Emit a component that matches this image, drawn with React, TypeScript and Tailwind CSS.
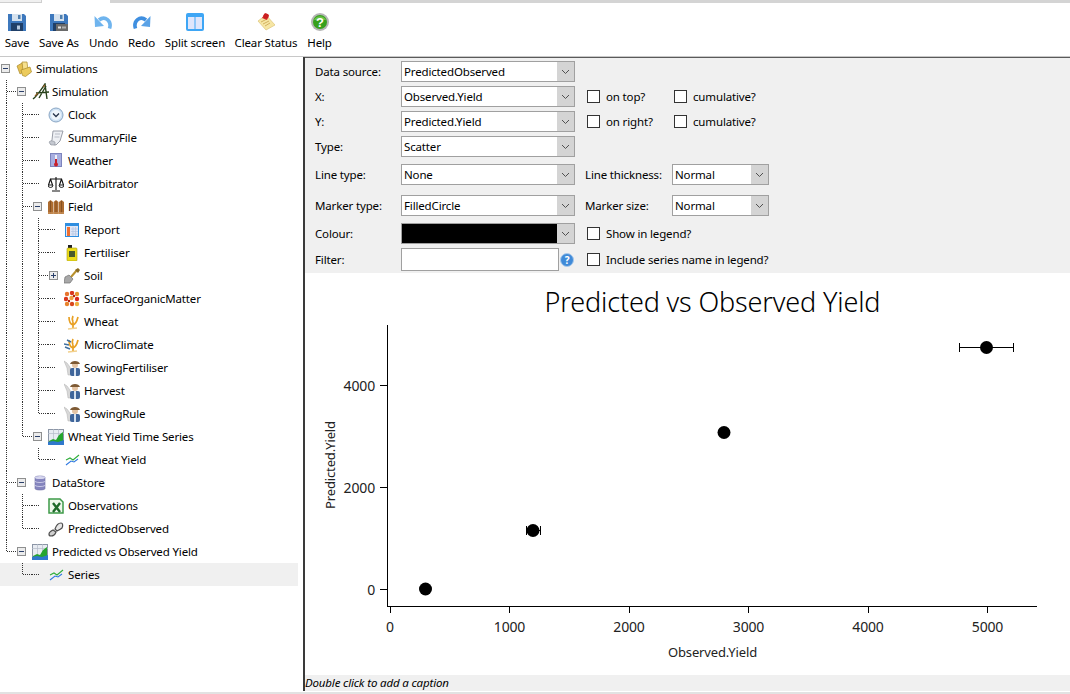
import type { ReactNode } from 'react';

const Svg = ({ size = 16, children }: { size?: number; children: ReactNode }) => (
  <svg width={size} height={size} viewBox={`0 0 ${size} ${size}`} className="shrink-0">
    {children}
  </svg>
);

// toolbar icons (18px)
const SaveIcon = ({ extra }: { extra?: boolean }) => (
  <Svg size={18}>
    <path d="M0 1h16l2 2v15H0z" fill="#3d78bd" />
    <rect x="4" y="1" width="10" height="7" fill="#d6e2ee" />
    <rect x="10" y="2" width="2.5" height="4" fill="#4f7fae" />
    <rect x="3" y="10" width="12" height="8" fill="#1f3f68" />
    <rect x="9" y="12.5" width="3" height="4" fill="#b8cbe0" />
    {extra && <rect x="6" y="11" width="12" height="7" fill="#6a6a6a" />}
    {extra && <rect x="8" y="13.5" width="3" height="2" fill="#e4e4e4" />}
    {extra && <rect x="12" y="13.5" width="4" height="2" fill="#b0b0b0" />}
  </Svg>
);

const UndoIcon = ({ flip }: { flip?: boolean }) => (
  <svg width="19" height="18" viewBox="0 0 19 18" className={flip ? '-scale-x-100 shrink-0' : 'shrink-0'}>
    <path d="M15.5 15.5C18 8 11 2 5 7" fill="none" stroke={flip ? '#3f8fe0' : '#6fb4ee'} strokeWidth="3.6" />
    <path d="M0.5 3l0.5 11 9-1z" fill={flip ? '#5aa2e6' : '#6fb4ee'} />
  </svg>
);

const SplitIcon = () => (
  <Svg size={18}>
    <rect x="0" y="0" width="18" height="18" rx="2" fill="#3ea6f5" />
    <rect x="2" y="4" width="6.5" height="12" fill="#dfe6fb" />
    <rect x="9.5" y="4" width="6.5" height="12" fill="#dfe6fb" />
  </Svg>
);

const ClearIcon = () => (
  <Svg size={18}>
    <path d="M1 8l8-6 9 10-9 5z" fill="#f6e6a4" stroke="#dcc478" strokeWidth="0.7" />
    <path d="M4 9l6-3M6 11l6-3M8 13l5-3" stroke="#c9a24c" strokeWidth="0.8" />
    <path d="M5 5l3-5 4 2-2 5z" fill="#d92b2b" />
    <circle cx="9" cy="3" r="2.6" fill="#c91f1f" />
  </Svg>
);

const HelpIcon = () => (
  <Svg size={18}>
    <circle cx="9" cy="9" r="9" fill="#b4b4b4" />
    <circle cx="9" cy="9" r="7" fill="#37a01c" />
    <path d="M3 7a6.5 6 0 0 1 12 0z" fill="#7fd05a" opacity="0.7" />
    <text x="9" y="13.5" textAnchor="middle" fontSize="13" fontWeight="700" fill="#fff" fontFamily="'Liberation Sans', sans-serif">
      ?
    </text>
  </Svg>
);

// tree icons (16px)
const FolderIcon = () => (
  <Svg>
    <path d="M1 5l5-3 3 8-5 3z" fill="#e7c152" stroke="#a98a2c" strokeWidth="0.7" />
    <path d="M6 1h5l1 8-5 1z" fill="#f6e08e" stroke="#a98a2c" strokeWidth="0.7" />
    <path d="M5 9l9-3 1.5 5-6 4.5-3-1z" fill="#eccb5c" stroke="#a98a2c" strokeWidth="0.7" />
  </Svg>
);

const SimulationIcon = () => (
  <svg width="18" height="17" viewBox="0 0 18 17" className="shrink-0">
    <path d="M1 16C6 12 10 5 13 1l2 15M4 10l13-1M7 15L14 3" fill="none" stroke="#27411a" strokeWidth="1.4" />
    <path d="M3 13l3-3M11 4l2-2" stroke="#8a5a24" strokeWidth="1.3" />
  </svg>
);

const ClockIcon = () => (
  <Svg>
    <circle cx="8" cy="8" r="7" fill="#cfe2f4" stroke="#8aa6c4" />
    <circle cx="8" cy="8" r="5" fill="#eef5fb" />
    <path d="M5 6.5L8 9.5l3-3" fill="none" stroke="#26344a" strokeWidth="1.3" />
  </Svg>
);

const ScrollIcon = () => (
  <Svg>
    <path d="M5 1h10l-3 10-4 4-6-1 2-4z" fill="#eef0f4" stroke="#9a9ea8" />
    <path d="M1 12c2-2 4-1 6 0v3H3z" fill="#c4c8d0" stroke="#8a8e98" strokeWidth="0.6" />
    <path d="M7 4h5M6.5 7h5" stroke="#b8bcc6" />
  </Svg>
);

const WeatherIcon = () => (
  <Svg>
    <rect x="2.5" y="0.5" width="11" height="13" fill="#a7aee0" stroke="#7d84bd" />
    <rect x="7" y="2" width="2" height="8" fill="#eef0f8" />
    <rect x="7" y="6" width="2" height="6" fill="#c8202a" />
    <circle cx="8" cy="11.5" r="2" fill="#c8202a" />
  </Svg>
);

const ScalesIcon = () => (
  <Svg>
    <path d="M8 1v13M4 15h8M2 3h12M2.5 3L0.5 9M2.5 3l2 6M13.5 3l-2 6M13.5 3l2 6" fill="none" stroke="#111" strokeWidth="1.1" />
    <path d="M0 9a2.5 2.5 0 0 0 5 0zM11 9a2.5 2.5 0 0 0 5 0z" fill="#f0f0f0" stroke="#111" strokeWidth="0.9" />
  </Svg>
);

const FenceIcon = () => (
  <Svg>
    <path d="M0 15V3l2.5-2L5 3v12zM5.5 15V3L8 1l2.500 2v12zM11 15V3l2.500-2L16 3v12z" fill="#ad6c30" />
    <path d="M2.500 2v13M8 2v13M13.500 2v13" stroke="#7c4a1e" strokeWidth="0.8" />
    <path d="M0 14h16" stroke="#c89058" strokeWidth="1.5" />
  </Svg>
);

const ReportIcon = () => (
  <Svg>
    <rect x="1.5" y="1.5" width="13" height="13" fill="#dfe6f6" stroke="#2f8ee0" />
    <rect x="1" y="1" width="14" height="3" fill="#2f8ee0" />
    <rect x="3" y="5" width="3" height="9" fill="#ee7030" />
    <path d="M7 7h7M7 9.5h7M7 12h7M9 5v9M11.5 5v9" stroke="#b4c4e2" strokeWidth="0.7" />
  </Svg>
);

const BottleIcon = () => (
  <Svg>
    <rect x="4" y="0" width="4" height="3" fill="#222" />
    <rect x="3" y="3" width="10" height="13" rx="1" fill="#ecdc18" stroke="#a89a10" strokeWidth="0.6" />
    <rect x="5" y="6" width="6" height="6" fill="#4a5a2a" />
  </Svg>
);

const ShovelIcon = () => (
  <Svg>
    <path d="M7 9l6-7" stroke="#b8902c" strokeWidth="2" />
    <path d="M11 2l3-2 2 2-2 3z" fill="#8a6a20" />
    <path d="M0 15l1-6 4-2 4 4-3 4z" fill="#a8a8a8" stroke="#707070" strokeWidth="0.7" />
  </Svg>
);

const SomIcon = () => (
  <Svg>
    {[
      [3, 3, '#e8742c'],
      [8, 2, '#d9381e'],
      [13, 3, '#e8942c'],
      [2, 8, '#d9381e'],
      [7.5, 7, '#f0a040'],
      [13, 8, '#d9281e'],
      [3, 13, '#e8842c'],
      [8, 13, '#d9481e'],
      [13, 13, '#f0b040'],
    ].map(([x, y, c], i) => (
      <circle key={i} cx={x as number} cy={y as number} r="2.2" fill={c as string} />
    ))}
    <circle cx="5" cy="10" r="1.2" fill="#b02010" />
    <circle cx="10" cy="5" r="1.2" fill="#b02010" />
  </Svg>
);

const WheatIcon = ({ wind }: { wind?: boolean }) => (
  <Svg>
    <path d="M9 14V8M9 11C6 10 5 7 5 3M9 11c3-1 4-4 5-8M9 8C8 6 8 4 9 2" fill="none" stroke="#e8a024" strokeWidth="1.7" />
    <path d="M4 15l9-1" stroke="#f2d08c" strokeWidth="1.5" />
    {wind && <path d="M0 7l5 1M1 10l5 2M3 3l4 2" stroke="#3f6f9f" strokeWidth="1.4" />}
  </Svg>
);

const ManagerIcon = () => (
  <Svg>
    <path d="M0 1l3 2 3 4 2 8H4L3 8z" fill="#d8d8d8" stroke="#b0b0b0" strokeWidth="0.5" />
    <rect x="6" y="8" width="10" height="8" rx="2" fill="#3f659a" />
    <rect x="10" y="8" width="2" height="8" fill="#d4e0ee" />
    <circle cx="11" cy="5" r="3" fill="#e4c4a4" />
    <path d="M6 4c1-4 9-4 10 0z" fill="#7e5a34" />
  </Svg>
);

const GraphIcon = () => (
  <Svg>
    <rect x="0.5" y="0.5" width="15" height="15" fill="#e8ecf2" stroke="#8c96a6" />
    <path d="M0 4.5h16M5.5 0v16M10.5 0v16" stroke="#b4bcc8" strokeWidth="0.7" />
    <path d="M1 12l4-2 3 1 3-5 4-3v10H1z" fill="#26a52e" />
    <path d="M0 16v-3l5-1 5 1 6-2v5z" fill="#2f78cc" />
  </Svg>
);

const SeriesIcon = () => (
  <Svg>
    <path d="M2 8l4-2 3 2 6-5" fill="none" stroke="#2fae3a" strokeWidth="1.1" />
    <path d="M2 13l5-4 3 1 4-3" fill="none" stroke="#2f78e0" strokeWidth="1.1" />
  </Svg>
);

const StoreIcon = () => (
  <Svg>
    <path d="M3 2.5c0-2 10-2 10 0v11c0 2-10 2-10 0z" fill="#8585be" stroke="#6e6ea4" strokeWidth="0.6" />
    <ellipse cx="8" cy="2.5" rx="5" ry="1.6" fill="#d6d6ee" />
    <path d="M3 6.5c2 1.4 8 1.4 10 0M3 10.5c2 1.4 8 1.4 10 0" fill="none" stroke="#c8c8e6" />
  </Svg>
);

const ExcelIcon = () => (
  <Svg>
    <path d="M1 1h11l3 3v11H1z" fill="#eef8ec" stroke="#3e9a48" strokeWidth="1.5" />
    <path d="M5 5l7 9M12 5l-7 9" stroke="#1e6a2a" strokeWidth="2.4" />
  </Svg>
);

const LinkIcon = () => (
  <Svg>
    <path d="M1 13c0-2 2-3 4-4l3 2c-1 3-3 4-5 4s-2-1-2-2z" fill="#cfcfcf" stroke="#4e4e4e" strokeWidth="1.2" />
    <path d="M7 8c1-3 3-6 6-6 2 0 2 3 1 5-1 1-3 2-5 3z" fill="#e6e6e6" stroke="#4e4e4e" strokeWidth="1.2" />
  </Svg>
);

const tools = [
  { label: 'Save', w: 'w-[34px]', icon: <SaveIcon /> },
  { label: 'Save As', w: 'w-[50px]', icon: <SaveIcon extra /> },
  { label: 'Undo', w: 'w-[39px]', icon: <UndoIcon /> },
  { label: 'Redo', w: 'w-[37px]', icon: <UndoIcon flip /> },
  { label: 'Split screen', w: 'w-[70px]', icon: <SplitIcon /> },
  { label: 'Clear Status', w: 'w-[72px]', icon: <ClearIcon /> },
  { label: 'Help', w: 'w-[35px]', icon: <HelpIcon /> },
];

// guides: one char per ancestor level. | line, T tee, L corner, space nothing
const treeRows = [
  { name: 'Simulations', guides: '', open: 'minus', icon: <FolderIcon /> },
  { name: 'Simulation', guides: 'T', open: 'minus', icon: <SimulationIcon /> },
  { name: 'Clock', guides: '|T', icon: <ClockIcon /> },
  { name: 'SummaryFile', guides: '|T', icon: <ScrollIcon /> },
  { name: 'Weather', guides: '|T', icon: <WeatherIcon /> },
  { name: 'SoilArbitrator', guides: '|T', icon: <ScalesIcon /> },
  { name: 'Field', guides: '|T', open: 'minus', icon: <FenceIcon /> },
  { name: 'Report', guides: '||T', icon: <ReportIcon /> },
  { name: 'Fertiliser', guides: '||T', icon: <BottleIcon /> },
  { name: 'Soil', guides: '||T', open: 'plus', icon: <ShovelIcon /> },
  { name: 'SurfaceOrganicMatter', guides: '||T', icon: <SomIcon /> },
  { name: 'Wheat', guides: '||T', icon: <WheatIcon /> },
  { name: 'MicroClimate', guides: '||T', icon: <WheatIcon wind /> },
  { name: 'SowingFertiliser', guides: '||T', icon: <ManagerIcon /> },
  { name: 'Harvest', guides: '||T', icon: <ManagerIcon /> },
  { name: 'SowingRule', guides: '||L', icon: <ManagerIcon /> },
  { name: 'Wheat Yield Time Series', guides: '|L', open: 'minus', icon: <GraphIcon /> },
  { name: 'Wheat Yield', guides: '| L', icon: <SeriesIcon /> },
  { name: 'DataStore', guides: 'T', open: 'minus', icon: <StoreIcon /> },
  { name: 'Observations', guides: '|T', icon: <ExcelIcon /> },
  { name: 'PredictedObserved', guides: '|L', icon: <LinkIcon /> },
  { name: 'Predicted vs Observed Yield', guides: 'L', open: 'minus', icon: <GraphIcon /> },
  { name: 'Series', guides: ' L', icon: <SeriesIcon />, selected: true },
];

const GuideCell = ({ kind }: { kind: string }) => (
  <svg width="16" height="23" viewBox="0 0 16 23" className="shrink-0" shapeRendering="crispEdges">
    {(kind === '|' || kind === 'T') && <line x1="6.5" y1="0" x2="6.5" y2="23" stroke="#333" strokeDasharray="1 1" />}
    {kind === 'L' && <line x1="6.5" y1="0" x2="6.5" y2="12" stroke="#333" strokeDasharray="1 1" />}
    {(kind === 'T' || kind === 'L') && <line x1="7" y1="11.5" x2="16" y2="11.5" stroke="#333" strokeDasharray="1 1" />}
  </svg>
);

const Expander = ({ open }: { open?: string }) => (
  <svg width="16" height="23" viewBox="0 0 16 23" className="shrink-0" shapeRendering="crispEdges">
    {open ? (
      <>
        <rect x="1.5" y="7.5" width="8" height="8" fill="#ececec" stroke="#8e8f8f" />
        <line x1="3" y1="11.5" x2="8" y2="11.5" stroke="#2a3f6a" />
        {open === 'plus' && <line x1="5.5" y1="9" x2="5.5" y2="14" stroke="#2a3f6a" />}
      </>
    ) : (
      <line x1="0" y1="11.5" x2="7" y2="11.5" stroke="#333" strokeDasharray="1 1" />
    )}
  </svg>
);

const Combo = ({ value, w = 'w-[174px]', color }: { value?: string; w?: string; color?: boolean }) => (
  <div className={`${w} h-[21px] flex border border-[#a0a0a0] bg-white shrink-0`}>
    <div className={`flex-1 pl-[2px] leading-[19px] ${color ? 'bg-black' : ''}`}>{value}</div>
    <div className="w-[17px] bg-[#d4d4d4] flex items-center justify-center">
      <svg width="9" height="6" viewBox="0 0 9 6">
        <path d="M1 1l3.5 3.5L8 1" fill="none" stroke="#505050" />
      </svg>
    </div>
  </div>
);

const Check = ({ label, w = '' }: { label: string; w?: string }) => (
  <div className={`flex items-center ${w}`}>
    <div className="w-[13px] h-[13px] border border-[#333] bg-white shrink-0" />
    <span className="ml-[6px] whitespace-nowrap">{label}</span>
  </div>
);

const Label = ({ text }: { text: string }) => <div className="w-[86px] shrink-0 whitespace-nowrap">{text}</div>;

const Chart = () => {
  const xTicks = [
    [390, '0'],
    [509.5, '1000'],
    [629, '2000'],
    [748.5, '3000'],
    [868, '4000'],
    [987.5, '5000'],
  ] as const;
  const yTicks = [
    [385.5, '4000'],
    [487.5, '2000'],
    [589.5, '0'],
  ] as const;
  // viewBox uses page coordinates, the svg sits at 305,273
  return (
    <svg width="765" height="402" viewBox="305 273 765 402" className="block bg-white shrink-0">
      <text x="712.5" y="312" textAnchor="middle" fontSize="27" fontWeight="300" fill="#000">
        Predicted vs Observed Yield
      </text>
      <g stroke="#000" strokeWidth="1" shapeRendering="crispEdges">
        <line x1="387.5" y1="325" x2="387.5" y2="606" />
        <line x1="387" y1="606.5" x2="1037" y2="606.5" />
        {yTicks.map(([y]) => (
          <line key={y} x1="380" y1={y} x2="387" y2={y} />
        ))}
        {xTicks.map(([x]) => (
          <line key={x} x1={x} y1="606" x2={x} y2="613" />
        ))}
        <line x1="959.5" y1="347.5" x2="1013.5" y2="347.5" />
        <line x1="959.5" y1="343" x2="959.5" y2="352" />
        <line x1="1013.5" y1="343" x2="1013.5" y2="352" />
        <line x1="526" y1="530.5" x2="541" y2="530.5" />
        <line x1="526.5" y1="526" x2="526.5" y2="535" />
        <line x1="540.5" y1="526" x2="540.5" y2="535" />
      </g>
      <circle cx="425.5" cy="589" r="6.5" fill="#000" />
      <circle cx="533" cy="530.5" r="6.5" fill="#000" />
      <circle cx="724" cy="432.5" r="6.5" fill="#000" />
      <circle cx="986.5" cy="347.5" r="6.5" fill="#000" />
      <g fontSize="14" fill="#222">
        {yTicks.map(([y, t]) => (
          <text key={t} x="375" y={y + 5} textAnchor="end">
            {t}
          </text>
        ))}
        {xTicks.map(([x, t]) => (
          <text key={t} x={x} y="632" textAnchor="middle">
            {t}
          </text>
        ))}
      </g>
      <g fontSize="13" fill="#222">
        <text x="712.5" y="657" textAnchor="middle">
          Observed.Yield
        </text>
        <text x="335" y="465" textAnchor="middle" transform="rotate(-90 335 465)">
          Predicted.Yield
        </text>
      </g>
    </svg>
  );
};

export default function App() {
  return (
    <div className="w-[1070px] h-[694px] overflow-hidden bg-white text-[11.5px] tracking-[-0.15px] text-black font-['Noto_Sans',sans-serif] flex flex-col">
      {/* tab strip */}
      <div className="h-[3px] flex shrink-0">
        <div className="w-[42px] bg-[#f0f0f0] border-r border-b border-[#cfcfcf]" />
        <div className="w-[68px] bg-white" />
        <div className="flex-1 bg-[#d4d4d4]" />
      </div>

      {/* toolbar */}
      <div className="h-[53px] flex shrink-0">
        {tools.map((t) => (
          <div key={t.label} className={`${t.w} flex flex-col items-center pt-[10px] shrink-0`}>
            {t.icon}
            <span className="mt-[4px] whitespace-nowrap leading-[16px]">{t.label}</span>
          </div>
        ))}
      </div>

      <div className="flex flex-1 min-h-0 border-t border-[#c8c8c8] mb-[1px]">
        {/* simulation tree */}
        <div className="w-[303px] shrink-0">
          {treeRows.map((r) => (
            <div key={r.name} className={`h-[23px] w-[298px] flex items-center ${r.selected ? 'bg-[#f0f0f0]' : ''}`}>
              {r.guides.split('').map((g, i) => (
                <GuideCell key={i} kind={g} />
              ))}
              <Expander open={r.open} />
              <div className="w-[18px] shrink-0 flex">{r.icon}</div>
              <span className="ml-[2px] whitespace-nowrap">{r.name}</span>
            </div>
          ))}
        </div>

        {/* series editor */}
        <div className="flex-1 min-w-0 flex flex-col border-l-2 border-[#3a3a3a]">
          <div className="h-[216px] shrink-0 bg-[#f0f0f0] pl-[10px] pt-[3px] border-t border-[#5a5a5a] flex flex-col">
            <div className="flex items-center h-[21px]">
              <Label text="Data source:" />
              <Combo value="PredictedObserved" />
            </div>
            <div className="flex items-center h-[21px] mt-[4px]">
              <Label text="X:" />
              <Combo value="Observed.Yield" />
              <Check label="on top?" w="ml-[12px] w-[87px]" />
              <Check label="cumulative?" />
            </div>
            <div className="flex items-center h-[21px] mt-[4px]">
              <Label text="Y:" />
              <Combo value="Predicted.Yield" />
              <Check label="on right?" w="ml-[12px] w-[87px]" />
              <Check label="cumulative?" />
            </div>
            <div className="flex items-center h-[21px] mt-[4px]">
              <Label text="Type:" />
              <Combo value="Scatter" />
            </div>
            <div className="flex items-center h-[21px] mt-[7px]">
              <Label text="Line type:" />
              <Combo value="None" />
              <div className="ml-[10px] w-[87px] whitespace-nowrap">Line thickness:</div>
              <Combo value="Normal" w="w-[97px]" />
            </div>
            <div className="flex items-center h-[21px] mt-[10px]">
              <Label text="Marker type:" />
              <Combo value="FilledCircle" />
              <div className="ml-[10px] w-[87px] whitespace-nowrap">Marker size:</div>
              <Combo value="Normal" w="w-[97px]" />
            </div>
            <div className="flex items-center h-[21px] mt-[7px]">
              <Label text="Colour:" />
              <Combo color />
              <Check label="Show in legend?" w="ml-[12px]" />
            </div>
            <div className="flex items-center h-[23px] mt-[4px]">
              <Label text="Filter:" />
              <div className="w-[158px] h-[23px] border border-[#a0a0a0] bg-white shrink-0" />
              <div className="w-[15px] shrink-0 flex justify-end">
                <svg width="14" height="14" viewBox="0 0 14 14">
                  <circle cx="7" cy="7" r="6.5" fill="#3f8ad8" stroke="#a8c8ea" />
                  <text x="7" y="10.5" textAnchor="middle" fontSize="10" fontWeight="700" fill="#fff">
                    ?
                  </text>
                </svg>
              </div>
              <Check label="Include series name in legend?" w="ml-[13px]" />
            </div>
          </div>
          <Chart />
          <div className="flex-1 bg-[#f0f0f0] italic leading-[16px] whitespace-nowrap">Double click to add a caption</div>
        </div>
      </div>
      <div className="h-[2px] bg-[#e2e2e2] shrink-0" />
    </div>
  );
}
